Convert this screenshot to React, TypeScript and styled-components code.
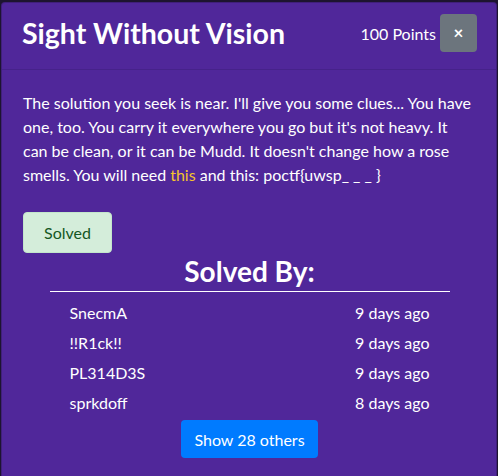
import React from "react";
import styled, { createGlobalStyle } from "styled-components";

const Global = createGlobalStyle`
  html, body { margin: 0; padding: 0; background: #1d1430; }
  body { font-family: Lato, "Noto Sans", sans-serif; }
  * { box-sizing: border-box; }
`;

const Backdrop = styled.div`
  width: 498px;
  height: 476px;
  padding: 2px 1px 0 1px;
  overflow: hidden;
`;

const Modal = styled.div`
  width: 496px;
  min-height: 480px;
  background: #50279a;
  border: 1px solid rgba(0, 0, 0, 0.2);
  border-radius: 4px;
  color: #fff;
`;

const Header = styled.div`
  display: flex;
  align-items: center;
  justify-content: space-between;
  padding: 6px 19px 12px 20px;
  border-bottom: 1px solid #46228a;
  height: 67px;
`;

const Title = styled.h3`
  margin: 0;
  font-size: 28.5px;
  font-weight: 700;
  line-height: 1.2;
`;

const HeaderRight = styled.div`
  display: flex;
  align-items: center;
  gap: 4px;
`;

const Points = styled.span`
  font-size: 16px;
`;

const CloseButton = styled.button`
  width: 37px;
  height: 38px;
  border: none;
  border-radius: 4px;
  background: #6c757d;
  color: #fff;
  font-size: 17px;
  font-weight: 700;
  font-family: inherit;
  padding: 0 0 2px 0;
  display: flex;
  align-items: center;
  justify-content: center;
`;

const Body = styled.div`
  padding: 21px 20px 0 21px;
`;

const Description = styled.p`
  margin: 0 0 25px 0;
  font-size: 16px;
  line-height: 24px;
`;

const Highlight = styled.span`
  color: #f5c42c;
`;

const SolvedBadge = styled.button`
  height: 41px;
  padding: 0 20px;
  border: 1px solid #c3e6cb;
  border-radius: 4px;
  background: #d4edda;
  color: #155724;
  font-family: inherit;
  font-size: 16px;
`;

const SolvedSection = styled.div`
  display: flex;
  flex-direction: column;
  align-items: center;
  margin-top: 1px;
`;

const SolvedTitle = styled.h3`
  margin: 0;
  font-size: 28px;
  font-weight: 700;
  line-height: 34px;
`;

const Rule = styled.div`
  width: 400px;
  height: 1px;
  background: #fff;
  margin-top: 3px;
`;

const List = styled.div`
  width: 400px;
  padding: 6px 20px 0 20px;
  display: flex;
  flex-direction: column;
`;

const Row = styled.div`
  display: flex;
  justify-content: space-between;
  font-size: 16px;
  line-height: 30px;
`;

const ShowButton = styled.button`
  margin-top: 2px;
  height: 38px;
  padding: 0 13px;
  border: none;
  border-radius: 4px;
  background: #007bff;
  color: #fff;
  font-family: inherit;
  font-size: 16px;
`;

const solvers = [
  { name: "SnecmA", when: "9 days ago" },
  { name: "!!R1ck!!", when: "9 days ago" },
  { name: "PL314D3S", when: "9 days ago" },
  { name: "sprkdoff", when: "8 days ago" },
];

export default function App() {
  return (
    <>
      <Global />
      <Backdrop>
        <Modal>
          <Header>
            <Title>Sight Without Vision</Title>
            <HeaderRight>
              <Points>100 Points</Points>
              <CloseButton>×</CloseButton>
            </HeaderRight>
          </Header>
          <Body>
            <Description>
              The solution you seek is near. I'll give you some clues... You have one, too. You
              carry it everywhere you go but it's not heavy. It can be clean, or it can be Mudd.
              It doesn't change how a rose smells. You will need <Highlight>this</Highlight> and
              this: poctf{"{"}uwsp_ _ _ {"}"}
            </Description>
            <SolvedBadge>Solved</SolvedBadge>
            <SolvedSection>
              <SolvedTitle>Solved By:</SolvedTitle>
              <Rule />
              <List>
                {solvers.map((s) => (
                  <Row key={s.name}>
                    <span>{s.name}</span>
                    <span>{s.when}</span>
                  </Row>
                ))}
              </List>
              <ShowButton>Show 28 others</ShowButton>
            </SolvedSection>
          </Body>
        </Modal>
      </Backdrop>
    </>
  );
}
